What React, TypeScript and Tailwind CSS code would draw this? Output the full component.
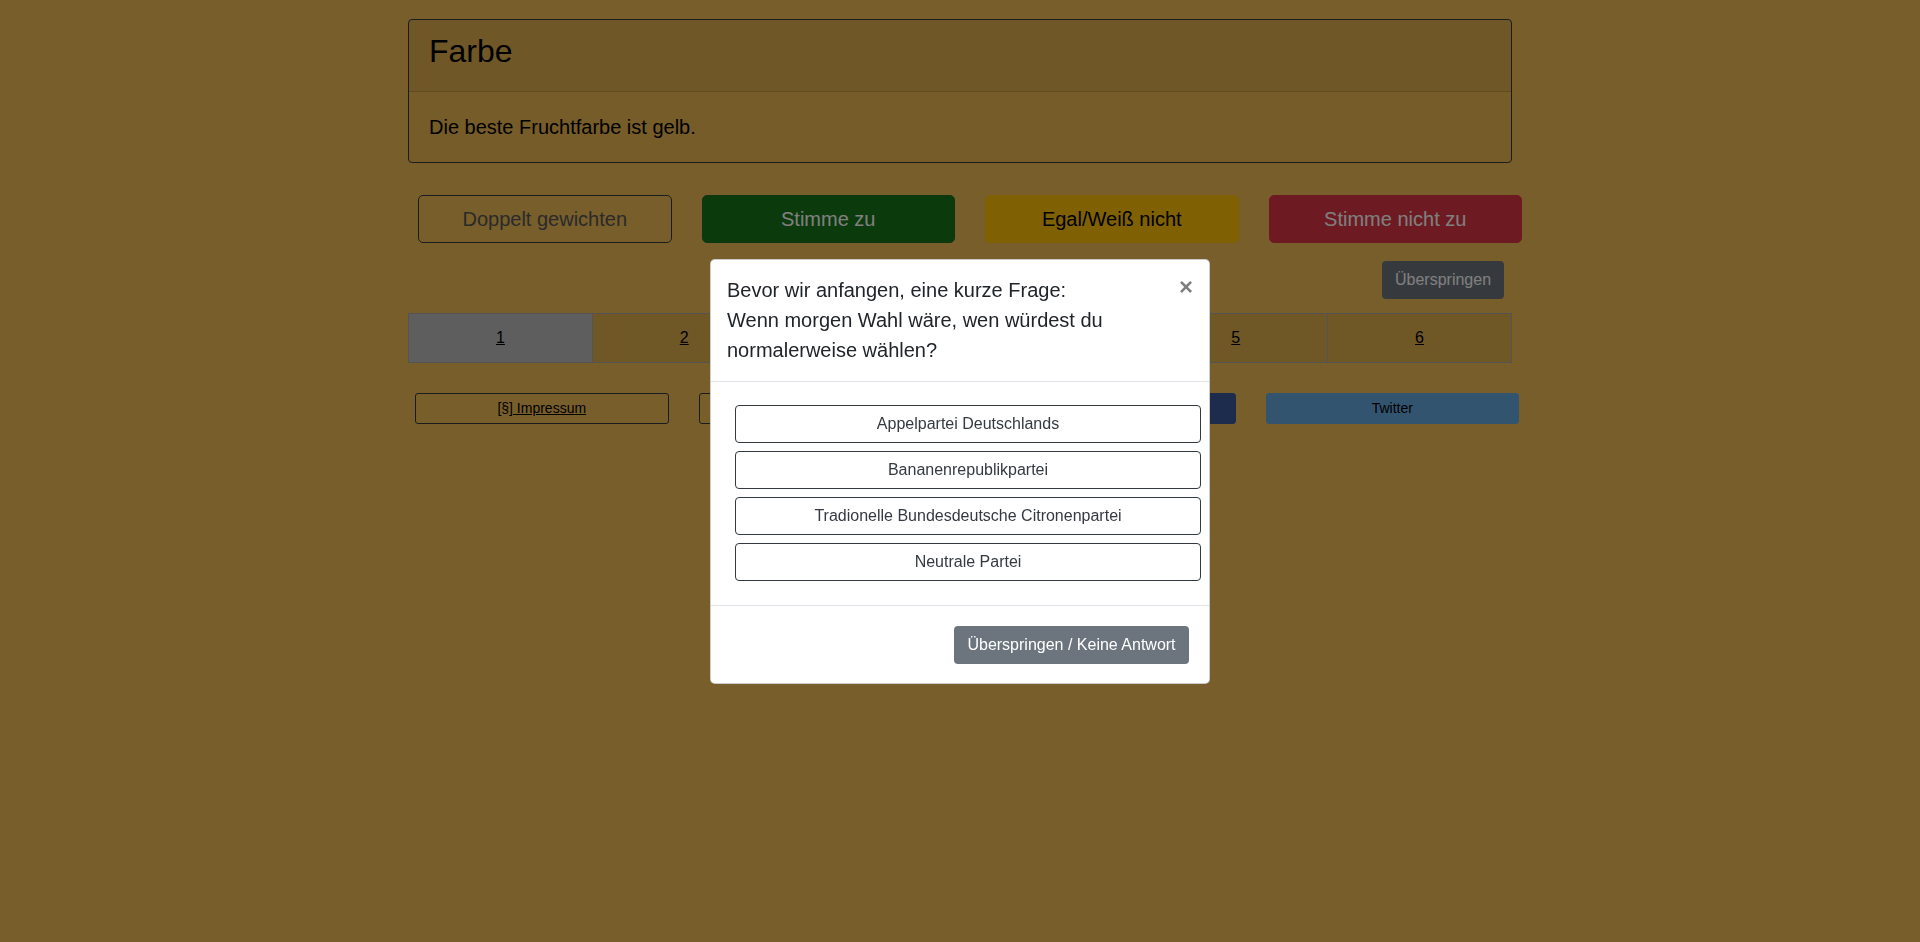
const font = "font-['Liberation_Sans',Arial,Helvetica,sans-serif]";

const parties = [
  'Appelpartei Deutschlands',
  'Bananenrepublikpartei',
  'Tradionelle Bundesdeutsche Citronenpartei',
  'Neutrale Partei',
];

const pages = ['1', '2', '3', '4', '5', '6'];

function QuestionCard() {
  return (
    <div className="rounded-[4px] border border-[#343a40]">
      <div className="border-b border-black/[0.12] bg-black/[0.07] px-5 pb-[12px] pt-[12px]">
        <h2 className="mb-2 text-[32px] font-medium leading-[39px] text-black">Farbe</h2>
      </div>
      <div className="bg-black/[0.02] px-5 py-5">
        <p className="text-[20px] leading-[30px] text-black">Die beste Fruchtfarbe ist gelb.</p>
      </div>
    </div>
  );
}

function VoteButtons() {
  return (
    <div className="ml-[10px] mt-[32px] flex w-[1104px] gap-[30px]">
      <button className="flex-1 rounded-[5px] border border-[#343a40] px-4 py-2 text-[20px] leading-[30px] text-[#555]">
        Doppelt gewichten
      </button>
      <button className="flex-1 rounded-[5px] border border-[#1e6a22] bg-[#167418] px-4 py-2 text-[20px] leading-[30px] text-white">
        Stimme zu
      </button>
      <button className="flex-1 rounded-[5px] border border-[#ffc107] bg-[#ffc107] px-4 py-2 text-[20px] leading-[30px] text-black">
        Egal/Weiß nicht
      </button>
      <button className="flex-1 rounded-[5px] border border-[#dc3545] bg-[#dc3545] px-4 py-2 text-[20px] leading-[30px] text-white">
        Stimme nicht zu
      </button>
    </div>
  );
}

function Pagination() {
  return (
    <div className="mt-[14px] flex border border-[#a8a8a8]">
      {pages.map((p, i) => (
        <div
          key={p}
          className={
            'flex h-[48px] flex-1 items-center justify-center border-l border-[#a8a8a8] first:border-l-0 ' +
            (i === 0 ? 'bg-[#bcbcbc]' : 'bg-black/[0.075]')
          }
        >
          <a className="text-[16px] text-black underline">{p}</a>
        </div>
      ))}
    </div>
  );
}

function FooterLinks() {
  return (
    <div className="ml-[7px] mt-[30px] flex w-[1104px] gap-[30px]">
      <button className="h-[31px] flex-1 rounded-[3px] border border-[#343a40] px-2 text-[14px] text-black">
        [§]<span className="underline"> Impressum</span>
      </button>
      <button className="h-[31px] flex-1 rounded-[3px] border border-[#343a40] px-2 text-[14px] text-black">
        <span className="underline">Datenschutz</span>
      </button>
      <button className="h-[31px] flex-1 rounded-[3px] border border-[#3b5998] bg-[#3b5998] px-2 text-[14px] text-white">
        Facebook
      </button>
      <button className="h-[31px] flex-1 rounded-[3px] border border-[#66a8de] bg-[#66a8de] px-2 text-[14px] text-black">
        Twitter
      </button>
    </div>
  );
}

function PartyModal() {
  return (
    <div className="fixed inset-0 flex items-center justify-center bg-black/50">
      <div className="w-[500px] rounded-[5px] border border-black/20 bg-white">
        <div className="flex items-start border-b border-[#dee2e6] px-4 pb-4 pt-[15px]">
          <h5 className="flex-1 text-[20px] font-medium leading-[30px] text-[#212529]">
            Bevor wir anfangen, eine kurze Frage:
            <br />
            Wenn morgen Wahl wäre, wen würdest du normalerweise wählen?
          </h5>
          <button className="-my-4 -mr-4 ml-auto p-4 text-[24px] font-bold leading-[24px] text-black opacity-50">
            ×
          </button>
        </div>
        <div className="flex flex-col gap-2 pb-[24px] pl-[24px] pr-[8px] pt-[23px]">
          {parties.map((name) => (
            <button
              key={name}
              className="h-[38px] w-full rounded-[4px] border border-[#343a40] text-[16px] text-[#343a40]"
            >
              {name}
            </button>
          ))}
        </div>
        <div className="flex justify-end border-t border-[#dee2e6] pb-[19px] pr-[20px] pt-[20px]">
          <button className="h-[38px] w-[235px] rounded-[4px] bg-[#6c757d] text-[16px] text-white">
            Überspringen / Keine Antwort
          </button>
        </div>
      </div>
    </div>
  );
}

export default function App() {
  return (
    <div className={`min-h-screen bg-[#f0bc54] ${font}`}>
      <div className="mx-auto w-[1104px] pt-[19px]">
        <QuestionCard />
        <VoteButtons />
        <div className="mr-[8px] mt-[18px] flex justify-end">
          <button className="h-[38px] w-[122px] rounded-[4px] bg-[#6c757d] text-[16px] text-white">
            Überspringen
          </button>
        </div>
        <Pagination />
        <FooterLinks />
      </div>
      <PartyModal />
    </div>
  );
}
